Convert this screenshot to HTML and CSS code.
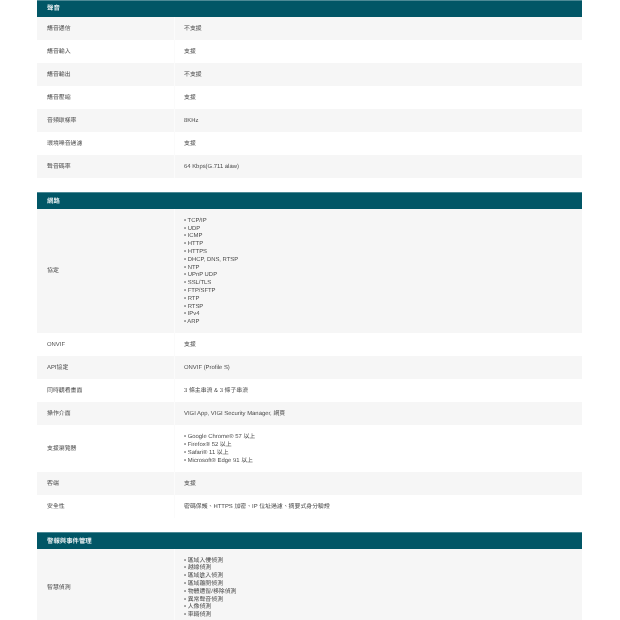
FILE: index.html
```html
<!DOCTYPE html>
<html lang="zh-Hant">
<head>
<meta charset="utf-8">
<title>規格</title>
<link rel="stylesheet" href="styles.css">
</head>
<body>
<main class="page">
<section class="spec">
<h2 class="spec-head">聲音</h2>
<div class="row"><div class="key">語音通信</div><div class="val">不支援</div></div>
<div class="row"><div class="key">語音輸入</div><div class="val">支援</div></div>
<div class="row"><div class="key">語音輸出</div><div class="val">不支援</div></div>
<div class="row"><div class="key">語音壓縮</div><div class="val">支援</div></div>
<div class="row"><div class="key">音頻取樣率</div><div class="val">8KHz</div></div>
<div class="row"><div class="key">環境噪音過濾</div><div class="val">支援</div></div>
<div class="row"><div class="key">聲音碼率</div><div class="val">64 Kbps(G.711 alaw)</div></div>
</section>
<section class="spec">
<h2 class="spec-head">網路</h2>
<div class="row"><div class="key">協定</div><div class="val">• TCP/IP<br>• UDP<br>• ICMP<br>• HTTP<br>• HTTPS<br>• DHCP, DNS, RTSP<br>• NTP<br>• UPnP UDP<br>• SSL/TLS<br>• FTP/SFTP<br>• RTP<br>• RTSP<br>• IPv4<br>• ARP</div></div>
<div class="row"><div class="key">ONVIF</div><div class="val">支援</div></div>
<div class="row"><div class="key">API協定</div><div class="val">ONVIF (Profile S)</div></div>
<div class="row"><div class="key">同時觀看畫面</div><div class="val">3 條主串流 &amp; 3 條子串流</div></div>
<div class="row"><div class="key">操作介面</div><div class="val">VIGI App, VIGI Security Manager, 網頁</div></div>
<div class="row"><div class="key">支援瀏覽器</div><div class="val">• Google Chrome® 57 以上<br>• Firefox® 52 以上<br>• Safari® 11 以上<br>• Microsoft® Edge 91 以上</div></div>
<div class="row"><div class="key">客端</div><div class="val">支援</div></div>
<div class="row"><div class="key">安全性</div><div class="val">密碼保護、HTTPS 加密、IP 位址過濾、摘要式身分驗證</div></div>
</section>
<section class="spec">
<h2 class="spec-head">警報與事件管理</h2>
<div class="row"><div class="key">智慧偵測</div><div class="val">• 區域入侵偵測<br>• 越線偵測<br>• 區域進入偵測<br>• 區域離開偵測<br>• 物體遺留/移除偵測<br>• 異常聲音偵測<br>• 人像偵測<br>• 車輛偵測</div></div>
</section>
</main>
</body>
</html>
```
FILE: styles.css
```css
html, body {
  margin: 0;
  padding: 0;
  background: #fff;
}
body {
  height: 620px;
  overflow: hidden;
  font-family: "Liberation Sans", "Noto Sans CJK TC", sans-serif;
  font-size: 5.9px;
  line-height: 7.8px;
  color: #4a4a4a;
  text-rendering: geometricPrecision;
}
.page {
  display: flex;
  flex-direction: column;
  gap: 13.6px;
  width: 545px;
  margin-top: -0.5px;
  margin-left: 37px;
  filter: blur(0.35px);
}
.spec-head {
  margin: 0;
  height: 17px;
  padding: 1.6px 0 0 10px;
  display: flex;
  align-items: center;
  background: #015666;
  border-top: 1px solid #4d8a96;
  box-sizing: border-box;
  color: #e8f0f2;
  font-size: 6.4px;
  font-weight: 700;
}
.row {
  display: grid;
  grid-template-columns: 137px 1fr;
  align-items: stretch;
  min-height: 23.1px;
}
.row:nth-of-type(odd) .key,
.row:nth-of-type(odd) .val {
  background: #f6f6f6;
}
.key, .val {
  padding: 9px 10px 6.2px;
  box-sizing: border-box;
}
.key {
  display: flex;
  align-items: center;
}
.val {
  display: block;
  padding-left: 9px;
  border-left: 1px solid #fbfbfb;
}
```
